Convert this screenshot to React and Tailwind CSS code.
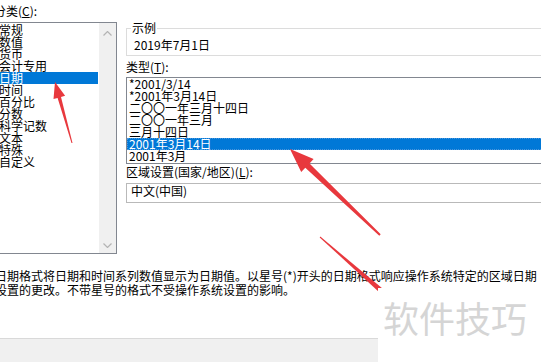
import React from 'react';

const categories = ['常规', '数值', '货币', '会计专用', '日期', '时间', '百分比', '分数', '科学记数', '文本', '特殊', '自定义'];

const types = ['*2001/3/14', '*2001年3月14日', '二〇〇一年三月十四日', '二〇〇一年三月', '三月十四日', '2001年3月14日', '2001年3月'];

const Chevron = ({ up }) => (
    <svg width="9" height="5" viewBox="0 0 9 5">
        <path
            d={up ? 'M0.5 4.5 L4.5 0.5 L8.5 4.5' : 'M0.5 0.5 L4.5 4.5 L8.5 0.5'}
            stroke="#b4b4b4"
            strokeWidth="1.2"
            fill="none"
        />
    </svg>
);

const App = () => {
    return (
        <main className="relative w-[541px] h-[362px] overflow-hidden bg-white text-black flex flex-col font-['Noto_Sans_CJK_SC','Liberation_Sans',sans-serif] text-[12px] leading-[12px]">
            <div className="ml-[-6px] pt-[4px] flex items-start">
                {/* category list */}
                <div className="w-[123px] shrink-0 flex flex-col">
                    <div className="h-[18px] leading-[14px] whitespace-nowrap">
                        分类(<span className="underline">C</span>):
                    </div>
                    <div className="h-[232px] border border-[#828790] flex">
                        <ul className="flex-1 pt-[1px] pr-[1px]">
                            {categories.map((c) => (
                                <li
                                    key={c}
                                    className={
                                        c === '日期'
                                            ? 'h-[12px] pl-[4px] whitespace-nowrap bg-[#0078d7] text-white'
                                            : 'h-[12px] pl-[4px] whitespace-nowrap'
                                    }
                                >
                                    {c}
                                </li>
                            ))}
                        </ul>
                        <div className="w-[17px] bg-[#f0f0f0] flex flex-col justify-between items-center pt-[8px] pb-[5px]">
                            <Chevron up />
                            <Chevron />
                        </div>
                    </div>
                </div>

                {/* right side */}
                <div className="ml-[9px] w-[440px] shrink-0 flex flex-col">
                    <fieldset className="mt-[18px] border border-[#dcdcdc] pl-[7px] pt-[5px] pb-[4px]">
                        <legend className="ml-[-3px] px-[1px]">示例</legend>
                        <div>2019年7月1日</div>
                    </fieldset>
                    <div className="mt-[5px] whitespace-nowrap">
                        类型(<span className="underline">T</span>):
                    </div>
                    <ul className="mt-[4px] h-[87px] border border-[#828790]">
                        {types.map((t) => (
                            <li
                                key={t}
                                className={
                                    t === '2001年3月14日'
                                        ? 'h-[12px] pl-[2px] whitespace-nowrap bg-[#0078d7] text-white outline-1 outline-dotted outline-[#4a95dc] -outline-offset-1'
                                        : 'h-[12px] pl-[2px] whitespace-nowrap'
                                }
                            >
                                {t}
                            </li>
                        ))}
                    </ul>
                    <div className="mt-[2px] whitespace-nowrap">
                        区域设置(国家/地区)(<span className="underline">L</span>):
                    </div>
                    <div className="mt-[5px] h-[20px] border border-[#b9b9b9] pl-[4px] pt-[1px]">中文(中国)</div>
                </div>
            </div>

            <p className="ml-[-5px] mt-[15px] leading-[14px] whitespace-nowrap">
                日期格式将日期和时间系列数值显示为日期值。以星号(*)开头的日期格式响应操作系统特定的区域日期
                <br />
                设置的更改。不带星号的格式不受操作系统设置的影响。
            </p>

            <div className="mt-auto h-[24px] border-t border-[#d9d9d9] bg-[#f0f0f0]" />

            {/* annotation arrows */}
            <svg className="absolute inset-0 pointer-events-none" width="541" height="362" viewBox="0 0 541 362">
                <polygon
                    points="55,82 65.1,95.8 61,96.9 72.5,142.9 71.5,143.1 57.6,97.9 53.5,99"
                    fill="#e8383d"
                />
                <polygon
                    points="290,149 313.6,159.1 309.5,163.4 380.7,234.3 379.3,235.7 305.3,167.8 301.2,172.1"
                    fill="#e8383d"
                />
                <polygon points="320.3,236.6 386.7,292.1 383.3,295.9 319.7,237.4" fill="#e8383d" />
            </svg>

            {/* watermark */}
            <div className="absolute left-[378px] top-[288px] w-[163px] h-[74px] bg-white pl-[5px] pt-[11px] text-[36px] leading-[36px] text-[#d5d5d5] whitespace-nowrap">
                软件技巧
            </div>
        </main>
    );
};

export default App;
